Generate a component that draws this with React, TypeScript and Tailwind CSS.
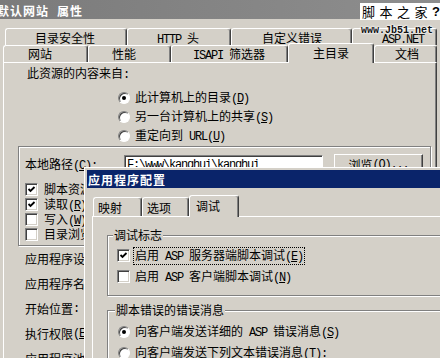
import type { ReactNode } from "react";

// ascii runs in the half-width look of the old bitmap font
const A = ({ children }: { children: ReactNode }) => (
  <span className="font-['Liberation_Mono',monospace] tracking-[-1.2px]">{children}</span>
);

function Check({ on }: { on?: boolean }) {
  return (
    <span className="flex h-[13px] w-[13px] shrink-0 items-center justify-center border border-t-[#808080] border-l-[#808080] border-b-white border-r-white bg-white shadow-[inset_1px_1px_0_#404040,inset_-1px_-1px_0_#d4d0c8]">
      {on && (
        <svg width="9" height="9" viewBox="0 0 9 9">
          <path d="M1.5 4 L3.5 6 L7.5 2" stroke="#000" strokeWidth="1.8" fill="none" />
        </svg>
      )}
    </span>
  );
}

function Radio({ on }: { on?: boolean }) {
  return (
    <span className="flex h-[12px] w-[12px] shrink-0 items-center justify-center rounded-full border border-t-[#808080] border-l-[#808080] border-b-white border-r-white bg-white shadow-[inset_1px_1px_0_#404040]">
      {on && <span className="h-[4px] w-[4px] rounded-full bg-black" />}
    </span>
  );
}

const tab =
  "shrink-0 rounded-t-[3px] border-t border-l border-r border-t-white border-l-white border-r-[#404040] bg-[#d4d0c8] shadow-[inset_-1px_0_0_#808080]";

const etched = "border border-[#808080] shadow-[1px_1px_0_white,inset_1px_1px_0_white]";

export default function App() {
  return (
    <div className="relative h-[358px] w-[440px] overflow-hidden bg-[#d4d0c8] font-['Noto_Sans_CJK_SC',sans-serif] text-[12px] leading-[14px] text-black">
      {/* main window title */}
      <div className="h-[19px] bg-linear-to-r from-[#7b7b7b] to-[#8e8e8e] pt-[4px] font-bold tracking-[1px] text-white">
        <span className="-ml-[3px] inline-block">默认网站</span>
        <span className="ml-[8px] inline-block">属性</span>
      </div>

      {/* back tab row */}
      <div className="ml-[5px] mt-[9px] flex h-[17px]">
        <div className={`${tab} h-full w-[122px] pl-[29px] pt-[2px]`}>目录安全性</div>
        <div className={`${tab} h-full w-[104px] pl-[29px] pt-[2px]`}>
          <A>HTTP </A>头
        </div>
        <div className={`${tab} h-full w-[121px] pl-[30px] pt-[2px]`}>自定义错误</div>
        <div className={`${tab} h-full w-[85px] pl-[29px] pt-[2px]`}>
          <A>ASP.NET</A>
        </div>
      </div>

      {/* front tab row */}
      <div className="ml-[3px] flex h-[17px] items-start">
        <div className={`${tab} h-full w-[85px] pl-[24px] pt-[1px]`}>网站</div>
        <div className={`${tab} h-full w-[83px] pl-[23px] pt-[1px]`}>性能</div>
        <div className={`${tab} h-full w-[117px] pl-[21px] pt-[1px]`}>
          <A>ISAPI </A>筛选器
        </div>
        <div className={`${tab} relative z-10 -mt-[2px] h-[20px] w-[86px] pl-[24px] pt-[2px]`}>主目录</div>
        <div className={`${tab} h-full w-[63px] pl-[20px] pt-[1px]`}>文档</div>
      </div>

      {/* property page */}
      <div className="ml-[3px] h-[300px] w-[434px] border-t border-l border-r border-t-white border-l-white border-r-[#404040] shadow-[inset_-1px_0_0_#808080]">
        <div className="mt-[3px] pl-[23px]">
          此资源的内容来自<A>:</A>
        </div>

        <div className="ml-[114px] mt-[6px] flex flex-col">
          <div className="flex h-[19px] items-center gap-[5px]">
            <Radio on />
            <span>
              此计算机上的目录<A>(<u>D</u>)</A>
            </span>
          </div>
          <div className="flex h-[19px] items-center gap-[5px]">
            <Radio />
            <span>
              另一台计算机上的共享<A>(<u>S</u>)</A>
            </span>
          </div>
          <div className="flex h-[19px] items-center gap-[5px]">
            <Radio />
            <span>
              重定向到<A> URL(<u>U</u>)</A>
            </span>
          </div>
        </div>

        <div className={`${etched} ml-[14px] mt-[1px] h-[100px] w-[413px]`}>
          <div className="mt-[7px] flex h-[22px] items-center">
            <span className="w-[105px] shrink-0 pl-[6px]">
              本地路径<A>(<u>C</u>):</A>
            </span>
            <div className="flex h-[20px] w-[199px] shrink-0 items-center border border-t-[#808080] border-l-[#808080] border-b-white border-r-white bg-white pl-[2px] shadow-[inset_1px_1px_0_#404040]">
              <A>{"F:\\www\\kanghui\\kanghui"}</A>
            </div>
            <div className="ml-[11px] flex h-[22px] w-[89px] shrink-0 items-center justify-center border border-t-white border-l-white border-b-[#404040] border-r-[#404040] shadow-[inset_-1px_-1px_0_#808080]">
              浏览<A>(<u>O</u>)...</A>
            </div>
          </div>
          <div className="mt-[6px] flex flex-col pl-[6px]">
            <div className="flex h-[15px] items-center gap-[6px]">
              <Check on />
              <span>
                脚本资源访问<A>(<u>T</u>)</A>
              </span>
            </div>
            <div className="flex h-[15px] items-center gap-[6px]">
              <Check on />
              <span>
                读取<A>(<u>R</u>)</A>
              </span>
            </div>
            <div className="flex h-[15px] items-center gap-[6px]">
              <Check />
              <span>
                写入<A>(<u>W</u>)</A>
              </span>
            </div>
            <div className="flex h-[15px] items-center gap-[6px]">
              <Check />
              <span>
                目录浏览<A>(<u>B</u>)</A>
              </span>
            </div>
          </div>
        </div>

        <div className="flex flex-col pl-[21px]">
          <div className="flex h-[25px] items-center">应用程序设置</div>
          <div className="flex h-[25px] items-center">
            应用程序名<A>(<u>M</u>):</A>
          </div>
          <div className="flex h-[25px] items-center">
            开始位置<A>:</A>
          </div>
          <div className="flex h-[25px] items-center">
            执行权限<A>(<u>E</u>):</A>
          </div>
          <div className="flex h-[25px] items-center">
            应用程序池<A>(<u>N</u>):</A>
          </div>
        </div>
      </div>

      {/* app configuration dialog on top */}
      <div className="absolute left-[84px] top-[167px] h-[200px] w-[400px] bg-[#d4d0c8] pl-[3px] pt-[3px] shadow-[inset_1px_1px_0_white]">
        <div className="h-[18px] bg-[#0a246a] pl-[1px] pt-[3px] font-bold tracking-[1px] text-white">应用程序配置</div>

        <div className="ml-[6px] mt-[9px] flex h-[19px] items-start">
          <div className={`${tab} h-full w-[49px] pl-[4px] pt-[3px]`}>映射</div>
          <div className={`${tab} h-full w-[47px] pl-[4px] pt-[3px]`}>选项</div>
          <div className={`${tab} relative z-10 -mt-[2px] h-[22px] w-[50px] pl-[6px] pt-[3px]`}>调试</div>
        </div>

        <div className="ml-[5px] h-[200px] border-t border-l border-t-white border-l-white">
          <fieldset className={`${etched} ml-[14px] mt-[11px] w-[360px] pb-[8px] pl-[9px]`}>
            <legend className="-ml-[4px] bg-[#d4d0c8] px-[1px]">调试标志</legend>
            <div className="flex flex-col pt-[3px]">
              <div className="flex h-[21px] items-center gap-[4px]">
                <Check on />
                <span className="px-[1px] outline-1 outline-dotted outline-black">
                  启用<A> ASP </A>服务器端脚本调试<A>(<u>E</u>)</A>
                </span>
              </div>
              <div className="flex h-[21px] items-center gap-[5px]">
                <Check />
                <span>
                  启用<A> ASP </A>客户端脚本调试<A>(<u>N</u>)</A>
                </span>
              </div>
            </div>
          </fieldset>

          <fieldset className={`${etched} ml-[14px] mt-[7px] w-[360px] pb-[8px] pl-[10px]`}>
            <legend className="-ml-[3px] bg-[#d4d0c8] px-[1px]">脚本错误的错误消息</legend>
            <div className="flex flex-col pt-[4px]">
              <div className="flex h-[21px] items-center gap-[5px]">
                <Radio on />
                <span>
                  向客户端发送详细的<A> ASP </A>错误消息<A>(<u>S</u>)</A>
                </span>
              </div>
              <div className="flex h-[21px] items-center gap-[5px]">
                <Radio />
                <span>
                  向客户端发送下列文本错误消息<A>(<u>T</u>):</A>
                </span>
              </div>
            </div>
          </fieldset>
        </div>
      </div>

      {/* site watermark */}
      <div className="absolute left-[360px] top-[3px] flex h-[17px] w-[80px] items-center bg-white pl-[2px] text-[13px] tracking-[4.5px]">
        脚本之家
        <span className="font-['Liberation_Sans',sans-serif] font-bold tracking-normal">?</span>
      </div>
      <div className="absolute left-[361px] top-[26px] font-['Liberation_Mono',monospace] text-[10px] font-bold leading-[10px] text-[#111] [text-shadow:0_0_2px_#fff,0_0_2px_#fff,0_0_3px_#fff]">
        www.Jb51.net
      </div>
    </div>
  );
}
